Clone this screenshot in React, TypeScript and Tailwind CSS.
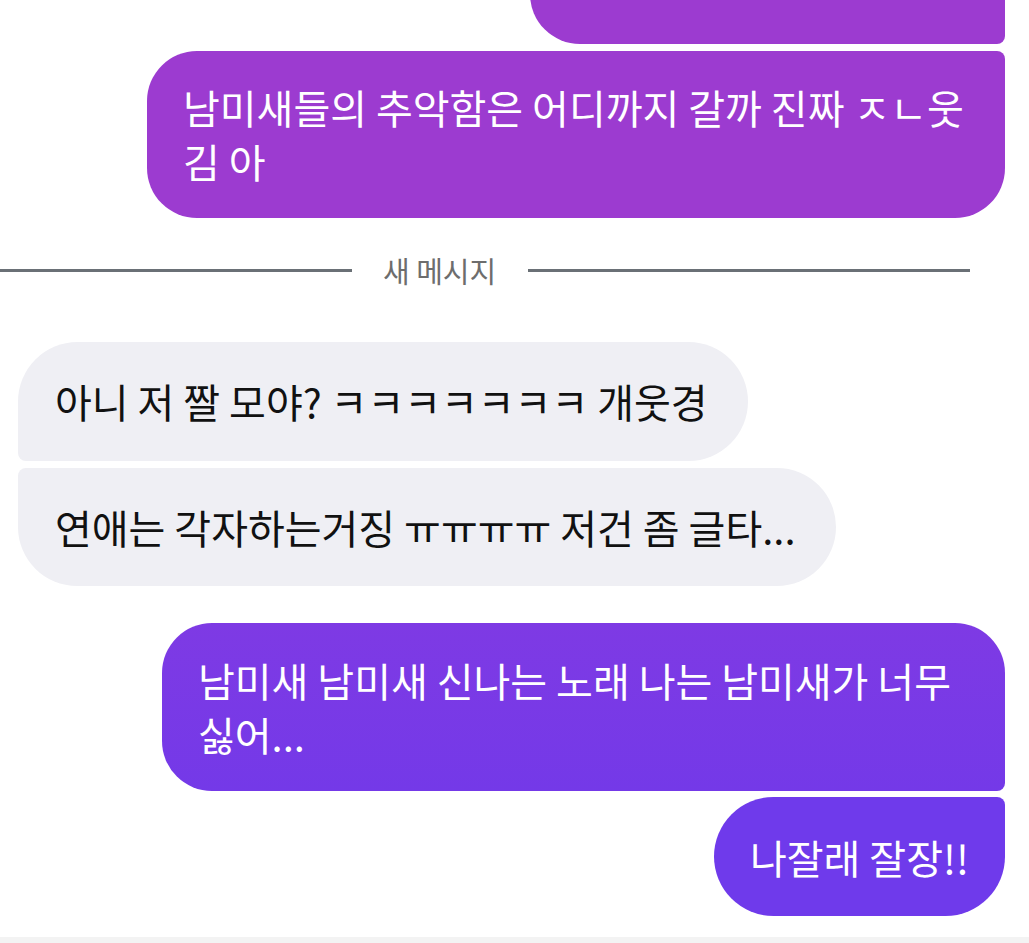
function Bubble({ className, children }: { className: string; children?: React.ReactNode }) {
    return <div className={`text-[40px] leading-[54px] whitespace-nowrap flex flex-col justify-center ${className}`}>{children}</div>;
}

export default function App() {
    return <div className="w-[1029px] h-[943px] overflow-hidden bg-white flex flex-col font-['Noto_Sans_CJK_KR','Noto_Sans',sans-serif]">
        {/* sent, scrolled off the top */}
        <div className="self-end mr-[24px] -mt-[56px] w-[475px] h-[100px] bg-[#9c3bd0] rounded-tl-[50px] rounded-tr-[8px] rounded-bl-[50px] rounded-br-[8px]"></div>

        <Bubble className="self-end mr-[24px] mt-[7px] w-[858px] h-[167px] px-[36px] text-white bg-[#9c3bd0] rounded-tl-[50px] rounded-tr-[8px] rounded-br-[50px] rounded-bl-[50px]">
            <span>남미새들의 추악함은 어디까지 갈까 진짜 ㅈㄴ웃</span>
            <span>김 아</span>
        </Bubble>

        <div className="mt-[33px] h-[40px] flex items-center">
            <div className="w-[352px] h-[3px] bg-[#6a7076]"></div>
            <span className="ml-[31px] mr-[32px] text-[29px] text-[#6d6d6d]">새 메시지</span>
            <div className="w-[442px] h-[3px] bg-[#6a7076]"></div>
        </div>

        <Bubble className="self-start ml-[18px] mt-[51px] w-[730px] h-[119px] px-[37px] text-[#111] bg-[#efeff4] rounded-tl-[60px] rounded-tr-[60px] rounded-br-[60px] rounded-bl-[8px]">
            <span>아니 저 짤 모야? ㅋㅋㅋㅋㅋㅋㅋ 개웃경</span>
        </Bubble>
        <Bubble className="self-start ml-[18px] mt-[7px] w-[818px] h-[119px] px-[37px] text-[#111] bg-[#efeff4] rounded-tl-[8px] rounded-tr-[60px] rounded-br-[60px] rounded-bl-[60px]">
            <span>연애는 각자하는거징 ㅠㅠㅠㅠ 저건 좀 글타...</span>
        </Bubble>

        <Bubble className="self-end mr-[24px] mt-[37px] w-[843px] h-[168px] px-[36px] text-white bg-gradient-to-b from-[#7e3ae4] to-[#7439e8] rounded-tl-[50px] rounded-tr-[50px] rounded-br-[8px] rounded-bl-[50px]">
            <span>남미새 남미새 신나는 노래 나는 남미새가 너무</span>
            <span>싫어...</span>
        </Bubble>
        <Bubble className="self-end mr-[24px] mt-[6px] w-[291px] h-[119px] px-[36px] text-white bg-[#6f3aeb] rounded-tl-[60px] rounded-tr-[8px] rounded-br-[60px] rounded-bl-[60px]">
            <span>나잘래 잘장!!</span>
        </Bubble>

        <div className="mt-[21px] h-[6px] bg-[#f3f3f3]"></div>
    </div>;
}
